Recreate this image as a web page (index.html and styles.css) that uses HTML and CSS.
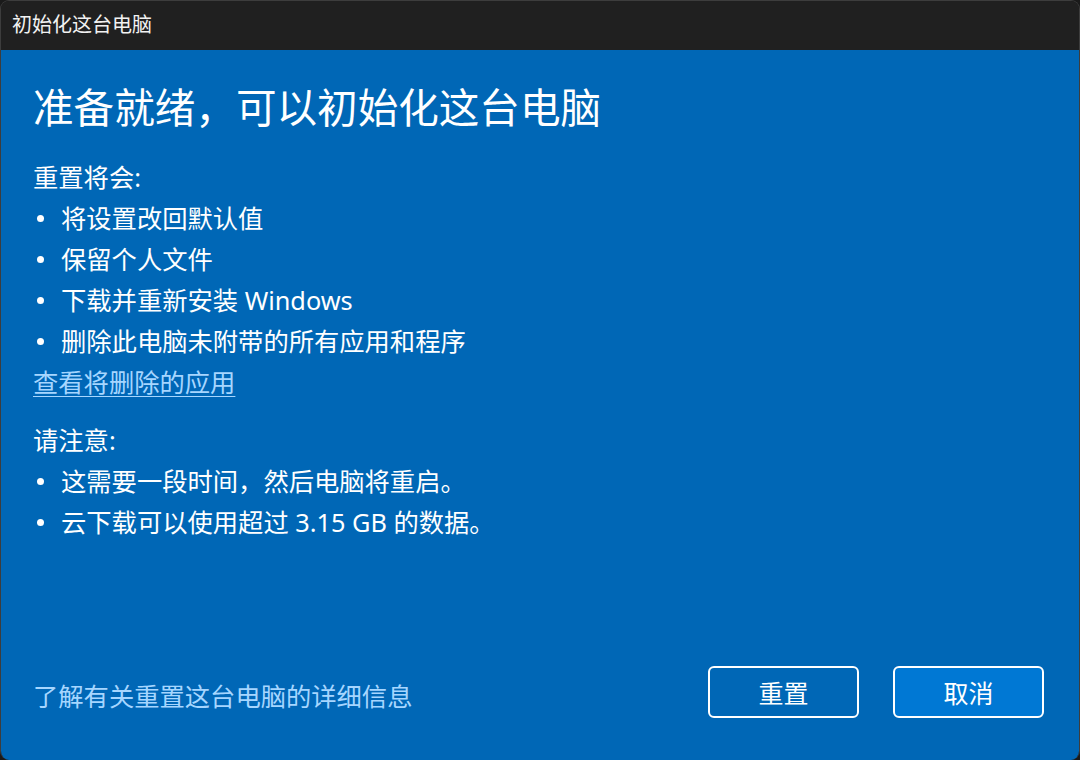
FILE: index.html
```html
<!DOCTYPE html>
<html lang="zh-CN">
<head>
  <meta charset="UTF-8">
  <meta name="viewport" content="width=device-width, initial-scale=1.0">
  <title>初始化这台电脑</title>
  <link rel="stylesheet" href="styles.css">
</head>
<body>
  <div class="window">
    <div class="title-bar">初始化这台电脑</div>
    <div class="content">
      <h1 class="heading">准备就绪，可以初始化这台电脑</h1>
      <!-- 重置将会 -->
      <div class="section">
        <p class="label">重置将会:</p>
        <ul class="list">
          <li>将设置改回默认值</li>
          <li>保留个人文件</li>
          <li>下载并重新安装 Windows</li>
          <li>删除此电脑未附带的所有应用和程序</li>
        </ul>
        <a class="link underline" href="#">查看将删除的应用</a>
      </div>
      <!-- 请注意 -->
      <div class="section">
        <p class="label">请注意:</p>
        <ul class="list">
          <li>这需要一段时间，然后电脑将重启。</li>
          <li>云下载可以使用超过 3.15 GB 的数据。</li>
        </ul>
      </div>
      <div class="footer">
        <a class="link" href="#">了解有关重置这台电脑的详细信息</a>
        <div class="buttons">
          <button class="btn">重置</button>
          <button class="btn btn-primary">取消</button>
        </div>
      </div>
    </div>
  </div>
</body>
</html>
```

FILE: styles.css
```css
* {margin: 0; padding: 0; box-sizing: border-box;}
body {
  background-color: #1a1a1a;
  font-family: "Noto Sans", "Noto Sans CJK SC", sans-serif;
  color: #fff;
}
.window {
  width: 1080px;
  height: 760px;
  display: flex;
  flex-direction: column;
  border: 1px solid #3d3d3d;
  border-bottom: none;
  border-radius: 9px;
  overflow: hidden;
}
.title-bar {
  height: 49px;
  line-height: 47px;
  padding-left: 11px;
  font-size: 20px;
  color: #f2f2f2;
  background-color: #202020;
}
.content {
  flex: 1;
  display: flex;
  flex-direction: column;
  padding: 30px 35px 42px 32px;
  background-color: #0067b6;
}
.heading {
  font-size: 40.6px;
  font-weight: normal;
  line-height: 56px;
  margin-bottom: 21px;
}
.section {
  display: flex;
  flex-direction: column;
  align-items: flex-start;
  font-size: 25.3px;
  line-height: 41px;
  margin-bottom: 17px;
}
.list {
  list-style: none;
}
.list li {
  display: flex;
  align-items: center;
}
.list li::before {
  content: "";
  width: 7px;
  height: 7px;
  border-radius: 50%;
  background-color: #fff;
  margin: 0 17px 0 4px;
}
.link {
  color: #a6d6ff;
  text-decoration: none;
  font-size: 25.3px;
}
.underline {
  text-decoration: underline;
  text-underline-offset: 4px;
  text-decoration-thickness: 1px;
}
.footer {
  margin-top: auto;
  display: flex;
  align-items: center;
  justify-content: space-between;
}
.footer .link {
  margin-top: 6px;
}
.buttons {
  display: flex;
  gap: 34px;
}
.btn {
  width: 151px;
  height: 52px;
  border: 2.5px solid #fff;
  border-radius: 6px;
  background-color: transparent;
  color: #fff;
  font-family: inherit;
  font-size: 25px;
  cursor: pointer;
}
.btn-primary {
  background-color: #0078d4;
}
```
